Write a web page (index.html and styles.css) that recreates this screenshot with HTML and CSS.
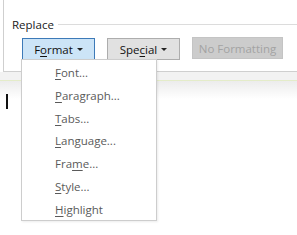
FILE: index.html
```
<!DOCTYPE html>
<html lang="en">
<head>
    <meta charset="UTF-8">
    <title>Replace - Format</title>
    <link rel="stylesheet" href="styles.css">
</head>
<body>
    <div class="dialog">
        <div class="group_title">
            <span>Replace</span>
            <div class="rule"></div>
        </div>
        <div class="buttons">
            <button class="btn btn_active"><span>F<u>o</u>rmat</span><span class="caret"></span></button>
            <button class="btn"><span>Spe<u>c</u>ial</span><span class="caret"></span></button>
            <button class="btn btn_disabled"><span>No Formatting</span></button>
        </div>
    </div>
    <div class="doc_edge"></div>
    <div class="doc">
        <div class="cursor"></div>
    </div>

    <!-- Format のドロップダウン -->
    <ul class="menu">
        <li><u>F</u>ont...</li>
        <li><u>P</u>aragraph...</li>
        <li><u>T</u>abs...</li>
        <li><u>L</u>anguage...</li>
        <li>Fra<u>m</u>e...</li>
        <li><u>S</u>tyle...</li>
        <li><u>H</u>ighlight</li>
    </ul>
</body>
</html>
```

FILE: styles.css
```
body {
    margin: 0;
    background: #fff;
    font-family: "Open Sans", "Noto Sans", sans-serif;
    position: relative;
    width: 297px;
    height: 235px;
    overflow: hidden;
}

.dialog {
    margin-left: 3px;
    height: 71px;
    border-left: 1px solid #cfcfcf;
    border-bottom: 1px solid #cfcfcf;
    background: #fff;
}

.group_title {
    display: flex;
    align-items: center;
    gap: 4px;
    padding: 16px 0 0 8px;
    height: 17px;
    font-size: 11.5px;
    color: #1a1a1a;
}
.group_title .rule {
    flex: 1;
    height: 1px;
    background: #dcdcdc;
}

.buttons {
    display: flex;
    gap: 12px;
    padding: 5px 0 0 18px;
}

.btn {
    height: 22px;
    width: 73px;
    padding: 0;
    border: 1px solid #adadad;
    background: #e1e1e1;
    font-family: "Open Sans", "Noto Sans", sans-serif;
    font-size: 11.5px;
    color: #111;
    display: flex;
    align-items: center;
    justify-content: center;
    gap: 4px;
}
.btn u {
    text-underline-offset: 2px;
}
.btn_active {
    background: #cce4f7;
    border-color: #3d7ab8;
}
.btn_disabled {
    width: 91px;
    margin-top: -1px;
    background: #cccccc;
    border-color: #c4c4c4;
    color: #a3a3a3;
}

.caret {
    width: 0;
    height: 0;
    border-left: 3px solid transparent;
    border-right: 3px solid transparent;
    border-top: 3px solid #222;
    margin-top: 1px;
}

.doc_edge {
    height: 8px;
    background: #f2f2f2;
    border-bottom: 1px solid #e4ecc9;
}

.doc {
    height: 150px;
    background: linear-gradient(#ececec, #fff 18px);
    padding: 13px 0 0 6px;
}
.cursor {
    width: 2px;
    height: 15px;
    background: #111;
}

.menu {
    position: absolute;
    left: 21px;
    top: 59px;
    width: 136px;
    height: 162px;
    margin: 0;
    padding: 2px 0 0 0;
    list-style: none;
    background: #fff;
    border: 1px solid #cdcdcd;
    box-shadow: 1px 1px 2px rgba(0, 0, 0, 0.08);
    box-sizing: border-box;
}
.menu li {
    height: 22.8px;
    line-height: 22px;
    padding-left: 33px;
    font-size: 11.5px;
    color: #5a5a5a;
}
.menu li u {
    text-underline-offset: 2px;
}
```
